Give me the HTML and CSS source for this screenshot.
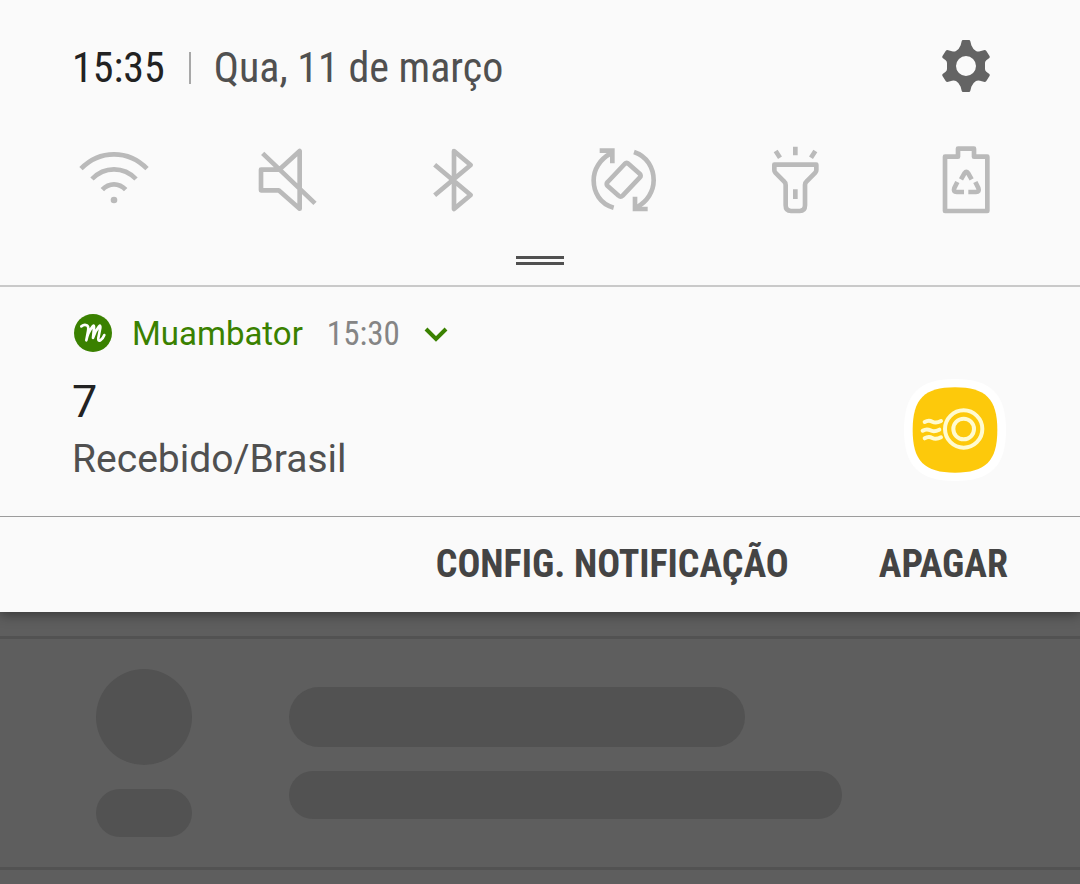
FILE: index.html
```html
<!DOCTYPE html>
<html lang="pt-BR">
<head>
<meta charset="utf-8">
<meta name="viewport" content="width=device-width, initial-scale=1">
<title>Notificações</title>
<link rel="stylesheet" href="styles.css">
</head>
<body>
<main class="shade">
  <header class="panel">
    <div class="status">
      <time class="clock" datetime="15:35">15:35</time>
      <span class="date">Qua, 11 de março</span>
      <button class="settings" type="button" aria-label="Configurações">
        <svg class="gear" viewBox="57 27 162 162" aria-hidden="true">
          <path fill-rule="evenodd" d="M129 30H147Q150 30 151 34L154 46Q158 57 168 63Q173 66 180 64L194 60Q197 60 199 63L209 79Q210 82 208 84L199 91Q195 94 195 99V117Q195 122 199 125L208 132Q210 134 209 137L199 153Q197 156 194 156L180 152Q173 150 168 153Q158 159 154 170L151 182Q150 186 147 186H129Q126 186 125 182L122 170Q118 159 108 153Q103 150 96 152L82 156Q79 156 77 153L67 137Q66 134 68 132L77 125Q81 122 81 117V99Q81 94 77 91L68 84Q66 82 67 79L77 63Q79 60 82 60L96 64Q103 66 108 63Q118 57 122 46L125 34Q126 30 129 30ZM138 78A30 30 0 1 0 138 138A30 30 0 1 0 138 78Z"/>
        </svg>
      </button>
    </div>
    <nav class="toggles" aria-label="Configurações rápidas">
      <button class="toggle" type="button" aria-label="Wi-Fi">
        <svg viewBox="24 12 216 216" aria-hidden="true">
          <path d="M33 86Q75 43 132 43Q189 43 231 86M66 117Q94 88 132 88Q170 88 198 117M97 149Q112 133 132 133Q152 133 167 149"/>
          <circle class="solid" cx="132" cy="180" r="10"/>
        </svg>
      </button>
      <button class="toggle" type="button" aria-label="Som">
        <svg viewBox="10 12 216 216" aria-hidden="true">
          <path d="M105 88L165 33V206L102 151H49V89H105M54 40L211 190"/>
        </svg>
      </button>
      <button class="toggle" type="button" aria-label="Bluetooth">
        <svg viewBox="13 12 216 216" aria-hidden="true">
          <path d="M60 74L168 165L118 207V33L168 75L60 166"/>
        </svg>
      </button>
      <button class="toggle" type="button" aria-label="Rotação automática">
        <svg viewBox="28 12 216 216" aria-hidden="true">
          <path d="M102 203C61 192 42 157 42 121C42 88 61 58 92 41M163 36C203 49 222 85 222 121C222 154 203 184 172 201"/>
          <path class="sharp" d="M60 32H98V70M204 207H166V170"/>
          <path d="M135 72Q141 66 147 72L180 101Q186 107 180 113L129 167Q123 173 117 167L84 138Q78 132 84 126Z"/>
        </svg>
      </button>
      <button class="toggle" type="button" aria-label="Lanterna">
        <svg viewBox="14 12 216 216" aria-hidden="true">
          <path d="M57 74H183V90Q183 95 180 98L154 124Q149 128 149 135V196Q149 213 133 213H107Q91 213 91 196V135Q91 128 86 124L60 98Q57 95 57 90Z"/>
          <path d="M120 20V46M61 33L74 53M180 33L167 53M120 148V177"/>
        </svg>
      </button>
      <button class="toggle" type="button" aria-label="Economia de energia">
        <svg viewBox="15 12 216 216" aria-hidden="true">
          <path d="M60 50H99V26H147V50H187V213H60Z"/>
          <path d="M108 118L119 99Q124 92 129 99L140 118M97 126L88 144Q84 156 95 156H117M151 126L160 144Q164 156 153 156H130"/>
        </svg>
      </button>
    </nav>
    <button class="handle" type="button" aria-label="Expandir painel"></button>
  </header>

  <article class="notification">
    <div class="content">
      <div class="text">
        <div class="source">
          <svg class="logo" viewBox="0 0 114 114" aria-hidden="true">
            <circle cx="57" cy="57" r="57" fill="#3a8100"/>
            <path d="M22 37Q31 30 38 34Q45 37 42 52L37 79Q41 56 56 37Q61 31 60 42L57 72Q63 51 75 37Q80 32 79 41L73 72Q72 83 79 79Q87 74 91 63" fill="none" stroke="#fff" stroke-width="8" stroke-linecap="round" stroke-linejoin="round"/>
          </svg>
          <span class="app">Muambator</span>
          <time class="when" datetime="15:30">15:30</time>
          <button class="expand" type="button" aria-label="Expandir notificação">
            <svg viewBox="0 0 24 16" aria-hidden="true"><path d="M2 3L12 13L22 3"/></svg>
          </button>
        </div>
        <h1 class="title">7</h1>
        <p class="message">Recebido/Brasil</p>
      </div>
      <svg class="badge" viewBox="27 12 306 306" aria-hidden="true">
        <path d="M180 12C288 12 333 57 333 165S288 318 180 318S27 273 27 165S72 12 180 12Z" fill="#fff"/>
        <path d="M180 37C272 37 307 72 307 165S272 293 180 293S53 258 53 165S88 37 180 37Z" fill="#fdc90b"/>
        <g fill="none" stroke="#fffbd0" stroke-width="12" stroke-linecap="round">
          <circle cx="206" cy="162" r="56"/>
          <circle cx="206" cy="162" r="31"/>
          <path d="M89 141Q101 134 112 140T138 138M83 167Q95 160 106 166T133 164M89 190Q101 183 112 189T138 187"/>
        </g>
      </svg>
    </div>
    <footer class="actions">
      <button class="action" type="button">CONFIG. NOTIFICAÇÃO</button>
      <button class="action" type="button">APAGAR</button>
    </footer>
  </article>

  <section class="placeholder" aria-hidden="true">
    <div class="side">
      <div class="avatar"></div>
      <div class="tag"></div>
    </div>
    <div class="lines">
      <div class="line line-title"></div>
      <div class="line line-body"></div>
    </div>
  </section>
</main>
</body>
</html>
```
FILE: styles.css
```css
* {
  box-sizing: border-box;
}

body {
  margin: 0;
  background: #5e5e5e;
  font-family: Roboto, "Liberation Sans", sans-serif;
}

button {
  padding: 0;
  border: 0;
  background: none;
  font: inherit;
  color: inherit;
  cursor: pointer;
}

svg {
  display: block;
}

.panel {
  position: relative;
  z-index: 1;
  display: flex;
  flex-direction: column;
  padding: 36px 78px 20px 72px;
  background: #fafafa;
  border-bottom: 2px solid #c9c9c9;
}

.status {
  display: flex;
  align-items: center;
  height: 60px;
  font-family: "Roboto Condensed", Roboto, sans-serif;
  font-size: 42px;
  line-height: 60px;
}

.clock,
.date {
  padding-top: 4px;
}

.clock {
  color: #222;
}

.date {
  display: flex;
  align-items: center;
  color: #505050;
}

.date::before {
  content: "";
  width: 2px;
  height: 32px;
  margin: 0 23px 0 24px;
  background: #a8a8a8;
}

.settings {
  margin-left: auto;
  margin-right: 9px;
}

.gear {
  width: 54px;
  height: 54px;
  fill: #646464;
}

.toggles {
  display: flex;
  justify-content: space-between;
  margin: 48px 0 0 6px;
}

.toggle svg {
  width: 72px;
  height: 72px;
  fill: none;
  stroke: #bababa;
  stroke-width: 14;
  stroke-linejoin: round;
}

.toggle .solid {
  fill: #bababa;
  stroke: none;
}

.toggle .sharp {
  stroke-linejoin: miter;
}

.handle {
  align-self: center;
  width: 48px;
  height: 9px;
  margin: 40px 0 0 6px;
  border: solid #505050;
  border-width: 3px 0;
}

.notification {
  position: relative;
  background: #fafafa;
  box-shadow: 0 2px 12px rgba(0, 0, 0, 0.45);
}

.content {
  display: flex;
  align-items: flex-end;
  justify-content: space-between;
  padding: 23px 74px 33px 72px;
}

.source {
  display: flex;
  align-items: center;
  height: 48px;
  font-size: 33px;
  line-height: 48px;
}

.logo {
  width: 38px;
  height: 38px;
  margin: 0 20px 2px 2px;
}

.app {
  color: #3a8100;
}

.when {
  margin: 0 24px;
  color: #858585;
  font-family: "Roboto Condensed", Roboto, sans-serif;
}

.expand svg {
  width: 24px;
  height: 16px;
  fill: none;
  stroke: #3a8100;
  stroke-width: 4;
}

.title {
  margin: 14px 0 0;
  color: #222;
  font-size: 45px;
  font-weight: 400;
  line-height: 60px;
}

.message {
  margin: 3px 0 0;
  color: #505050;
  font-size: 39px;
  line-height: 48px;
}

.badge {
  width: 102px;
  height: 102px;
  margin-bottom: 2px;
}

.actions {
  display: flex;
  justify-content: flex-end;
  gap: 90px;
  padding: 17px 72px 18px;
  border-top: 1px solid #9c9c9c;
}

.action {
  color: #444;
  font-family: "Roboto Condensed", Roboto, sans-serif;
  font-size: 38px;
  font-weight: 700;
  line-height: 60px;
}

.placeholder {
  display: flex;
  gap: 97px;
  margin-top: 24px;
  padding: 30px 100px 30px 96px;
  border: solid #525252;
  border-width: 3px 0;
}

.side {
  display: flex;
  flex-direction: column;
  gap: 24px;
  width: 96px;
}

.avatar,
.tag,
.line {
  background: #525252;
}

.avatar {
  height: 96px;
  border-radius: 50%;
}

.tag {
  height: 48px;
  border-radius: 24px;
}

.lines {
  display: flex;
  flex: 1;
  flex-direction: column;
  gap: 24px;
  padding-top: 18px;
}

.line {
  border-radius: 30px;
}

.line-title {
  width: 66%;
  height: 60px;
}

.line-body {
  width: 80%;
  height: 48px;
}
```
